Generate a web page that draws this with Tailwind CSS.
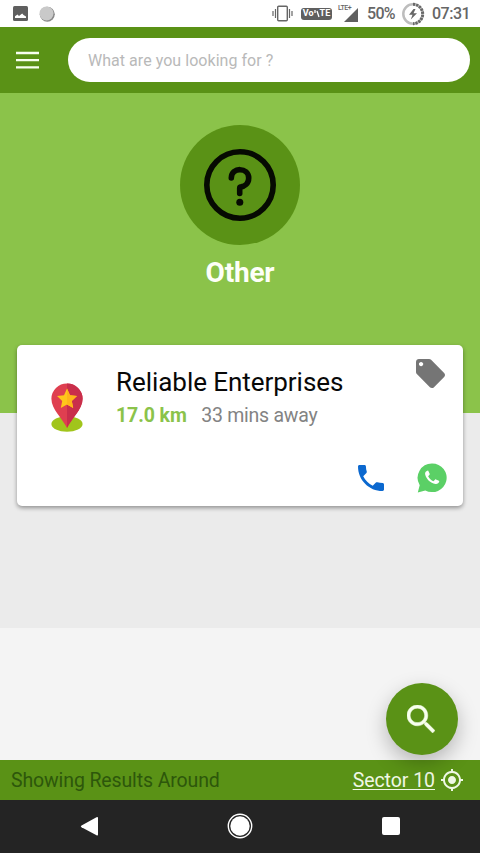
<!DOCTYPE html>
<html lang="en">
<head>
<meta charset="utf-8">
<meta name="viewport" content="width=device-width, initial-scale=1">
<title>Other</title>
<script src="https://cdn.jsdelivr.net/npm/@tailwindcss/browser@4"></script>
</head>
<body class="overflow-hidden bg-[#f4f4f4] font-[Roboto,sans-serif]">
<div class="relative flex h-[853px] w-[480px] flex-col overflow-hidden">
  <!-- Status bar -->
  <div class="flex h-[27px] shrink-0 items-center bg-white pl-[13px] pr-[10px] text-[#666]">
    <svg class="h-[15px] w-[15px]" viewBox="0 0 15 15"><rect width="15" height="15" rx="1.5" fill="#5f5f5f"/><path d="M2 12V10.200L4.500 8.500L6 10L9.200 7.500L10.500 9L13 10.500V12Z" fill="#fff"/></svg>
    <svg class="ml-[11px] h-4 w-4" viewBox="0 0 16 16"><circle cx="8.3" cy="8.3" r="7.5" fill="#888"/><circle cx="7.500" cy="7.500" r="7" fill="#c9c9c9"/></svg>
    <svg class="ml-auto h-[17px] w-[21px]" viewBox="0 0 21 17" fill="none" stroke="#666"><rect x="5.7" y="1.2" width="9.6" height="14.6" rx="1" stroke-width="1.4"/><path d="M3.5 4v9M17.500 4v9M1 6v5M20 6v5" stroke-width="1.2"/></svg>
    <div class="ml-[8px] flex h-[12px] w-[31px] items-center justify-center rounded-[3px] bg-[#5f5f5f] text-[9px] leading-none font-bold text-white">Vo<svg class="h-[8px] w-[6px]" viewBox="0 0 6 8" fill="none" stroke="#fff"><path d="M1 0v3M3 1L5 7" stroke-width="1.300"/></svg>TE</div>
    <div class="relative ml-[6px] h-[18px] w-[21px]">
      <span class="absolute top-0 left-0 text-[7px] leading-[7px] font-medium tracking-[-0.5px]">LTE+</span>
      <svg class="absolute top-[3px] left-[6px] h-[14px] w-[14px]" viewBox="0 0 14 14"><path d="M14 0V14H0Z" fill="#606060"/></svg>
    </div>
    <span class="ml-[8px] w-[29px] pt-px text-[16px] font-medium tracking-[-0.7px] whitespace-nowrap">50%</span>
    <svg class="ml-[5px] h-[24px] w-[24px]" viewBox="0 0 24 24" fill="none"><circle cx="12" cy="12" r="9.700" stroke="#bdbdbd" stroke-width="2.500"/><path d="M12 2.300A9.700 9.700 0 0 1 12 21.700" stroke="#686868" stroke-width="3" stroke-dasharray="2.200 1"/><path d="M12.500 7L8 12.800H11.500L9.800 17.500L16 11.300H12.500L14.500 7Z" fill="#666"/></svg>
    <span class="ml-[7px] w-[38px] pt-px text-[16px] font-medium whitespace-nowrap tracking-[-0.5px]">07:31</span>
  </div>
  <!-- Search header -->
  <header class="flex h-[66px] shrink-0 items-center bg-[#5a9216] pr-[10px] pl-4">
    <svg class="h-[18px] w-[23px]" viewBox="0 0 23 18"><path d="M0 2H23M0 9.200H23M0 16.300H23" stroke="#f8fff0" stroke-width="2.300"/></svg>
    <div class="ml-[29px] flex h-11 flex-1 items-center rounded-full bg-white pt-px pl-5 text-[16px] text-[#b9b9b9]"><span class="whitespace-nowrap tracking-[0.04px]">What are you looking for ?</span></div>
  </header>
  <!-- Category -->
  <section class="flex h-[320px] shrink-0 flex-col items-center bg-[#8bc34a] pt-8">
    <div class="flex h-[120px] w-[120px] items-center justify-center rounded-full bg-[#5a9216]">
      <svg class="h-[72px] w-[72px]" viewBox="0 0 72 72" fill="none" stroke="#060a02"><circle cx="36" cy="36" r="33.200" stroke-width="5.600"/><path d="M27.300 29C27.300 17.800 44.700 18 44.700 29C44.700 35 40 37.500 37 37.900C36 38 35.700 38.500 35.700 39.500V44.500" stroke-width="5.600" stroke-linecap="round" stroke-linejoin="round"/><circle cx="35.800" cy="53.300" r="3.500" fill="#060a02" stroke="none"/></svg>
    </div>
    <h1 class="mt-[12px] text-[28px] leading-8 font-bold tracking-[-0.2px] text-[#fdfff8]">Other</h1>
  </section>
  <!-- Results -->
  <main class="h-[215px] shrink-0 bg-[#ebebeb] px-[17px]">
    <article class="relative -mt-[68px] flex h-[161px] rounded-[5px] bg-white shadow-[0_2px_4px_rgba(0,0,0,0.38)]">
      <svg class="mt-[38px] ml-[34px] h-[50px] w-[32px] shrink-0" viewBox="0 0 32 50">
        <ellipse cx="16" cy="41" rx="15.600" ry="7.800" fill="#a1c51b"/>
        <path d="M16 45C11.500 35.500 .4 26.500 .4 15.800A15.600 15.300 0 0 1 31.600 15.800C31.600 26.500 20.500 35.500 16 45Z" fill="#df3f50"/>
        <path d="M16 .5A15.600 15.300 0 0 1 31.600 15.800C31.600 26.500 20.500 35.500 16 45Z" fill="#c92e4b"/>
        <path d="M16 5.500L19 12.300L26 13L20.800 18L22.200 25L16 21.400L9.800 25L11.200 18L6 13L13 12.300Z" fill="#ffc61b"/>
        <path d="M16 5.500L19 12.300L26 13L20.800 18L22.200 25L16 21.400Z" fill="#ffb51a"/>
      </svg>
      <div class="ml-[33px] flex-1 pt-[21px] whitespace-nowrap">
        <h2 class="text-[26px] leading-8 tracking-[-0.05px] text-[#080808]">Reliable Enterprises</h2>
        <p class="mt-[6px] text-[19.500px] leading-6 tracking-[-0.1px] text-[#838383]"><span class="mr-[14.500px] inline-block font-bold text-[#8bc34a]">17.0 km</span><span class="tracking-[-0.250px]">33 mins away</span></p>
      </div>
      <svg class="absolute top-[14px] right-[18px] h-[29px] w-[29px]" viewBox="2 2 20 20"><path fill="#757575" d="M21.410 11.580l-9-9C12.050 2.220 11.550 2 11 2H4c-1.100 0-2 .9-2 2v7c0 .55.220 1.050.590 1.420l9 9c.360.360.860.580 1.410.580.550 0 1.050-.220 1.410-.590l7-7c.370-.360.590-.860.590-1.410 0-.550-.230-1.060-.590-1.420zM5.500 7C4.670 7 4 6.330 4 5.500S4.670 4 5.500 4 7 4.670 7 5.500 6.330 7 5.500 7z"/></svg>
      <div class="absolute right-4 bottom-[13px] flex items-center gap-[33.500px]">
        <svg class="h-[26px] w-[26px]" viewBox="3 3 18 18"><path fill="#0b68cf" d="M6.620 10.790c1.440 2.830 3.760 5.140 6.590 6.590l2.200-2.200c.270-.270.670-.360 1.020-.240 1.120.370 2.330.570 3.570.570.550 0 1 .450 1 1V20c0 .550-.450 1-1 1-9.390 0-17-7.610-17-17 0-.550.450-1 1-1h3.500c.550 0 1 .450 1 1 0 1.250.200 2.450.570 3.570.110.350.030.740-.250 1.020l-2.200 2.200z"/></svg>
        <svg class="h-[30px] w-[30px]" viewBox="0 0 30 30"><path d="M15.200 .5A14.500 14.300 0 1 1 8.300 27.400L.8 29.500L2.700 22.200A14.300 14.300 0 0 1 15.200 .5Z" fill="#5bd066"/><path transform="translate(6.200 5.200) scale(.76)" fill="#fff" d="M6.500 10.700c1.700 3.200 4 5.300 7 6.500l2-2.100c.4-.4.800-.5 1.300-.3l3.800 1.600c.5.200.6.600.5 1.100-.5 2.300-2.600 3.500-4.900 3.200C9.300 19.500 4.200 14.300 2.600 8.200 2 5.800 3.400 3.600 5.700 3.200c.5-.1.900.1 1.100.6L8.500 7.400c.2.500.1.900-.2 1.300z"/></svg>
      </div>
    </article>
  </main>
  <div class="h-[132px] shrink-0 bg-[#f4f4f4]"></div>
  <!-- Location bar -->
  <footer class="flex h-10 shrink-0 items-center bg-[#5a9216] pr-[17px] pl-[11px] whitespace-nowrap">
    <span class="pt-px text-[19.500px] tracking-[-0.120px] text-[#2d570b]">Showing Results Around</span>
    <span class="ml-auto pt-px text-[19.500px] tracking-[-0.050px] text-[#f0f8e6] underline decoration-1 underline-offset-[2px]">Sector 10</span>
    <svg class="ml-[6px] h-[22px] w-[22px]" viewBox="1 1 22 22"><path fill="#eef8e4" d="M12 8c-2.210 0-4 1.790-4 4s1.790 4 4 4 4-1.790 4-4-1.790-4-4-4zm8.940 3c-.460-4.170-3.770-7.480-7.940-7.940V1h-2v2.060C6.830 3.520 3.520 6.830 3.060 11H1v2h2.060c.460 4.170 3.770 7.480 7.940 7.940V23h2v-2.060c4.170-.460 7.480-3.770 7.940-7.940H23v-2h-2.060zM12 19c-3.870 0-7-3.130-7-7s3.130-7 7-7 7 3.130 7 7-3.130 7-7 7z"/></svg>
  </footer>
  <!-- System navigation -->
  <nav class="flex h-[53px] shrink-0 items-center bg-[#242424] pb-px pl-20">
    <svg class="h-[20px] w-[18px]" viewBox="0 0 18 20"><path d="M1.500 9.500Q0 10.500 1.500 11.300L16.500 19.300Q18 20 18 18.500V2Q18 .5 16.500 1.300Z" fill="#fff"/></svg>
    <svg class="ml-[129px] h-[26px] w-[26px]" viewBox="0 0 26 26"><circle cx="13" cy="13" r="11.700" fill="none" stroke="#fff" stroke-width="1.400"/><circle cx="13" cy="13" r="9.700" fill="#fff"/></svg>
    <div class="ml-[129px] h-[18px] w-[18px] rounded-[2px] bg-white"></div>
  </nav>
  <button class="absolute top-[683px] right-[22.500px] flex h-[72px] w-[72px] items-center justify-center rounded-full bg-[#5a9216] shadow-[0_8px_20px_rgba(0,0,0,0.25)]">
    <svg class="mr-px h-[28px] w-[28px]" viewBox="3 3 17.500 17.500"><path fill="#f7ffed" stroke="#f7ffed" stroke-width="0.3" d="M15.500 14h-.790l-.280-.270C15.410 12.590 16 11.110 16 9.500 16 5.910 13.090 3 9.500 3S3 5.910 3 9.500 5.910 16 9.500 16c1.610 0 3.090-.590 4.230-1.570l.270.280v.790l5 4.990L20.490 19l-4.990-5zm-6 0C7.010 14 5 11.990 5 9.500S7.010 5 9.500 5 14 7.010 14 9.500 11.990 14 9.500 14z"/></svg>
  </button>
</div>
</body>
</html>
